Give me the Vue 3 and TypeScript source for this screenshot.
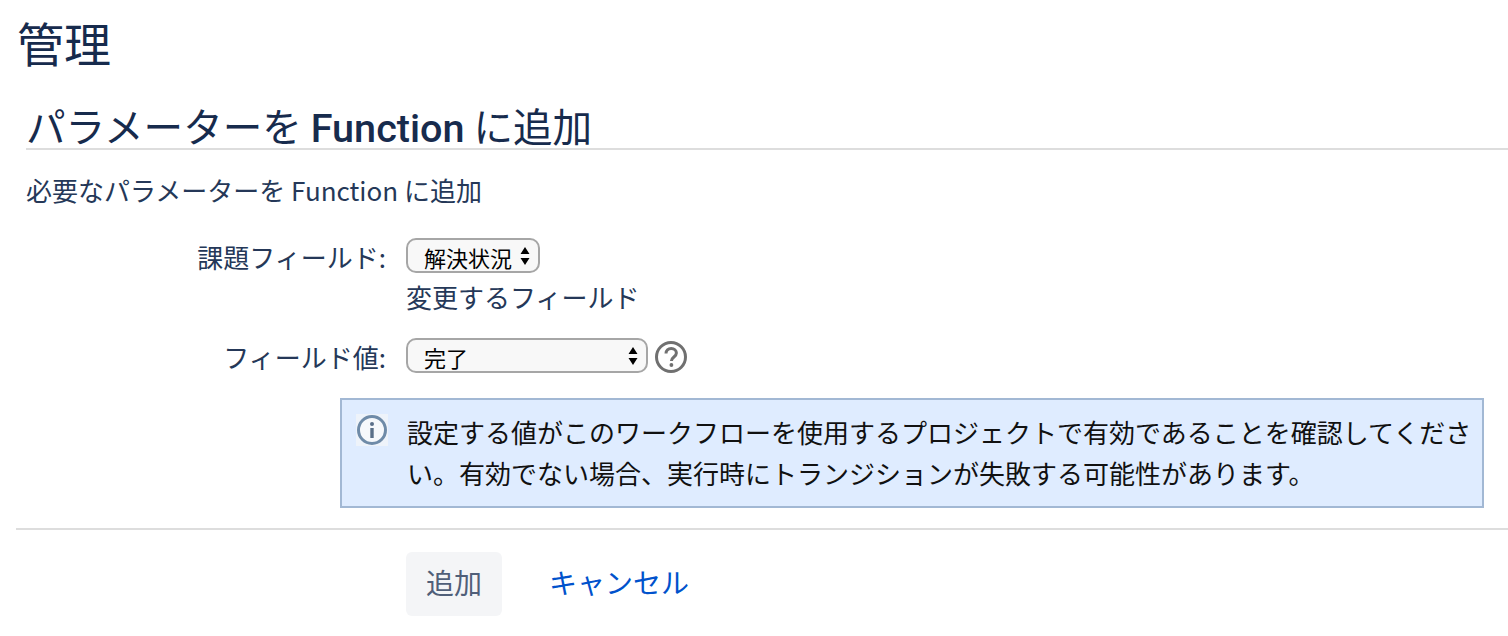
<script setup lang="ts">
const issueFields: string[] = ['解決状況']
const values: string[] = ['完了']
</script>

<template>
  <div class="page">
    <h1 class="title">管理</h1>
    <section class="form">
      <h2 class="heading">パラメーターを <b>Function</b> に追加</h2>
      <p class="desc">必要なパラメーターを Function に追加</p>
      <div class="row row-first">
        <label class="label">課題フィールド:</label>
        <div class="control">
          <span class="select-wrap small">
            <select class="select"><option v-for="f in issueFields" :key="f">{{ f }}</option></select>
            <svg class="arrows" width="12" height="20" viewBox="0 0 12 20"><path d="M6 1l4.500 7h-9zM6 19l4.500-7h-9z" fill="#000" /></svg>
          </span>
          <div class="hint">変更するフィールド</div>
        </div>
      </div>
      <div class="row row-second">
        <label class="label">フィールド値:</label>
        <div class="control inline">
          <span class="select-wrap wide">
            <select class="select"><option v-for="v in values" :key="v">{{ v }}</option></select>
            <svg class="arrows" width="12" height="20" viewBox="0 0 12 20"><path d="M6 1l4.500 7h-9zM6 19l4.500-7h-9z" fill="#000" /></svg>
          </span>
          <svg class="help" width="34" height="34" viewBox="0 0 34 34">
            <circle cx="17" cy="17" r="14.500" fill="none" stroke="#707070" stroke-width="3" />
            <path d="M12 13.500c0-3 2.200-5 5.200-5s5.200 1.900 5.200 4.500c0 4-5 4-5 8" fill="none" stroke="#707070" stroke-width="3" />
            <circle cx="17.400" cy="25" r="1.900" fill="#707070" />
          </svg>
        </div>
      </div>
      <div class="alert">
        <svg class="info" width="32" height="32" viewBox="0 0 32 32">
          <rect width="32" height="32" fill="#eef3fa" />
          <circle cx="16" cy="16" r="13.500" fill="#f6f8fb" stroke="#6f8ba8" stroke-width="3" />
          <circle cx="16" cy="10" r="2" fill="#5a6f88" />
          <rect x="14.300" y="14" width="3.400" height="10" fill="#5a6f88" />
        </svg>
        <p class="alert-text">設定する値がこのワークフローを使用するプロジェクトで有効であることを確認してください。有効でない場合、実行時にトランジションが失敗する可能性があります。</p>
      </div>
    </section>
    <div class="actions">
      <button class="btn" type="button">追加</button>
      <a class="cancel" href="#">キャンセル</a>
    </div>
  </div>
</template>

<style>
html, body { margin: 0; background: #fff; }
</style>

<style scoped>
.page {
  width: 1508px;
  height: 636px;
  overflow: hidden;
  box-sizing: border-box;
  font-family: "Noto Sans CJK JP", "Noto Sans", Roboto, sans-serif;
  color: #172b4d;
}
.title {
  margin: 0;
  padding: 12px 0 0 17px;
  height: 86px;
  box-sizing: border-box;
  font-size: 47px;
  line-height: 60px;
  font-weight: 400;
}
.form { padding-left: 26px; }
.heading {
  margin: 0;
  height: 64px;
  box-sizing: border-box;
  padding-top: 12px;
  border-bottom: 2px solid #dddddd;
  font-size: 39.600px;
  line-height: 54px;
  font-weight: 400;
  white-space: nowrap;
}
.heading b { font-family: Roboto, sans-serif; font-weight: 500; }
.desc {
  margin: 0;
  padding-top: 21px;
  height: 88px;
  box-sizing: border-box;
  font-size: 26px;
  line-height: 38px;
  color: #253858;
  white-space: nowrap;
}
.row { display: flex; gap: 20px; }
.row-first { height: 100px; }
.row-second { height: 60px; }
.label {
  width: 360px;
  text-align: right;
  font-size: 26px;
  line-height: 38px;
  color: #253858;
  white-space: nowrap;
}
.control.inline { display: flex; gap: 6px; align-items: flex-start; }
.select-wrap { position: relative; display: block; height: 35px; }
.select-wrap.small { width: 134px; }
.select-wrap.wide { width: 242px; }
.select {
  appearance: none;
  width: 100%;
  height: 35px;
  box-sizing: border-box;
  margin: 0;
  padding: 2px 0 0 16px;
  border: 2px solid #a6a6a6;
  border-radius: 10px;
  background: #f8f8f8;
  font-family: inherit;
  font-size: 22px;
  line-height: 30px;
  color: #000;
}
.arrows { position: absolute; right: 9px; top: 8px; pointer-events: none; }
.hint {
  margin-top: 5px;
  font-size: 26px;
  line-height: 38px;
  color: #253858;
  white-space: nowrap;
}
.help { margin-top: 2px; }
.alert {
  margin-left: 314px;
  width: 1144px;
  height: 110px;
  box-sizing: border-box;
  border: 2px solid #a2b8d4;
  background: #dfecff;
  display: flex;
  gap: 19px;
  padding: 14px 0 0 14px;
}
.info { flex: none; }
.alert-text {
  margin: -3px 0 0;
  width: 1076px;
  font-size: 26px;
  line-height: 41px;
  color: #111;
}
.actions {
  margin-top: 20px;
  margin-left: 16px;
  border-top: 2px solid #dddddd;
  padding: 22px 0 0 390px;
  display: flex;
  align-items: center;
  gap: 47px;
}
.btn {
  width: 96px;
  height: 64px;
  box-sizing: border-box;
  border: 0;
  border-radius: 6px;
  background: #f4f5f7;
  color: #505f79;
  font-family: inherit;
  font-size: 28px;
  padding: 0 0 4px;
}
.cancel {
  margin-top: -4px;
  color: #0052cc;
  font-size: 28px;
  text-decoration: none;
}
</style>
